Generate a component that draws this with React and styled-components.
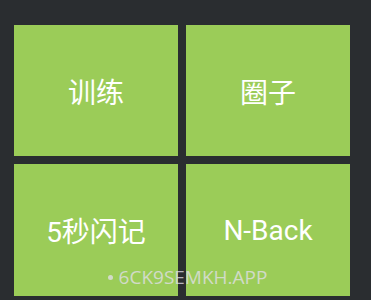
import styled, { createGlobalStyle } from "styled-components";

const GlobalStyle = createGlobalStyle`
  html, body {
    margin: 0;
    padding: 0;
    background: #2a2d30;
  }
`;

const Screen = styled.div`
  position: relative;
  width: 371px;
  height: 300px;
  box-sizing: border-box;
  padding: 25px 21px 4px 14px;

  display: grid;
  grid-template-columns: 164px 164px;
  grid-template-rows: 131px 132px;
  gap: 8px;

  background: #2a2d30;
  overflow: hidden;
`;

const Tile = styled.button`
  border: none;
  padding: 0;
  margin: 0;

  display: flex;
  align-items: center;
  justify-content: center;

  background: #9bcc58;
  color: #ffffff;
  font-family: Roboto, "Noto Sans CJK SC", sans-serif;
  font-size: 28px;
  font-weight: 400;
`;

const Watermark = styled.div`
  position: absolute;
  left: 0;
  right: 0;
  top: 264px;

  display: flex;
  justify-content: center;
  align-items: center;
  gap: 6px;
  padding-left: 4px;

  color: rgba(228, 224, 238, 0.75);
  font-family: "Open Sans", sans-serif;
  font-size: 19px;
  pointer-events: none;
`;

const Dot = styled.span`
  width: 5px;
  height: 5px;
  border-radius: 50%;
  background: currentColor;
`;

const items = ["训练", "圈子", "5秒闪记", "N-Back"];

export default function App() {
  return (
    <>
      <GlobalStyle />
      <Screen>
        {items.map((label) => (
          <Tile key={label}>{label}</Tile>
        ))}
        <Watermark>
          <Dot />
          6CK9SEMKH.APP
        </Watermark>
      </Screen>
    </>
  );
}
